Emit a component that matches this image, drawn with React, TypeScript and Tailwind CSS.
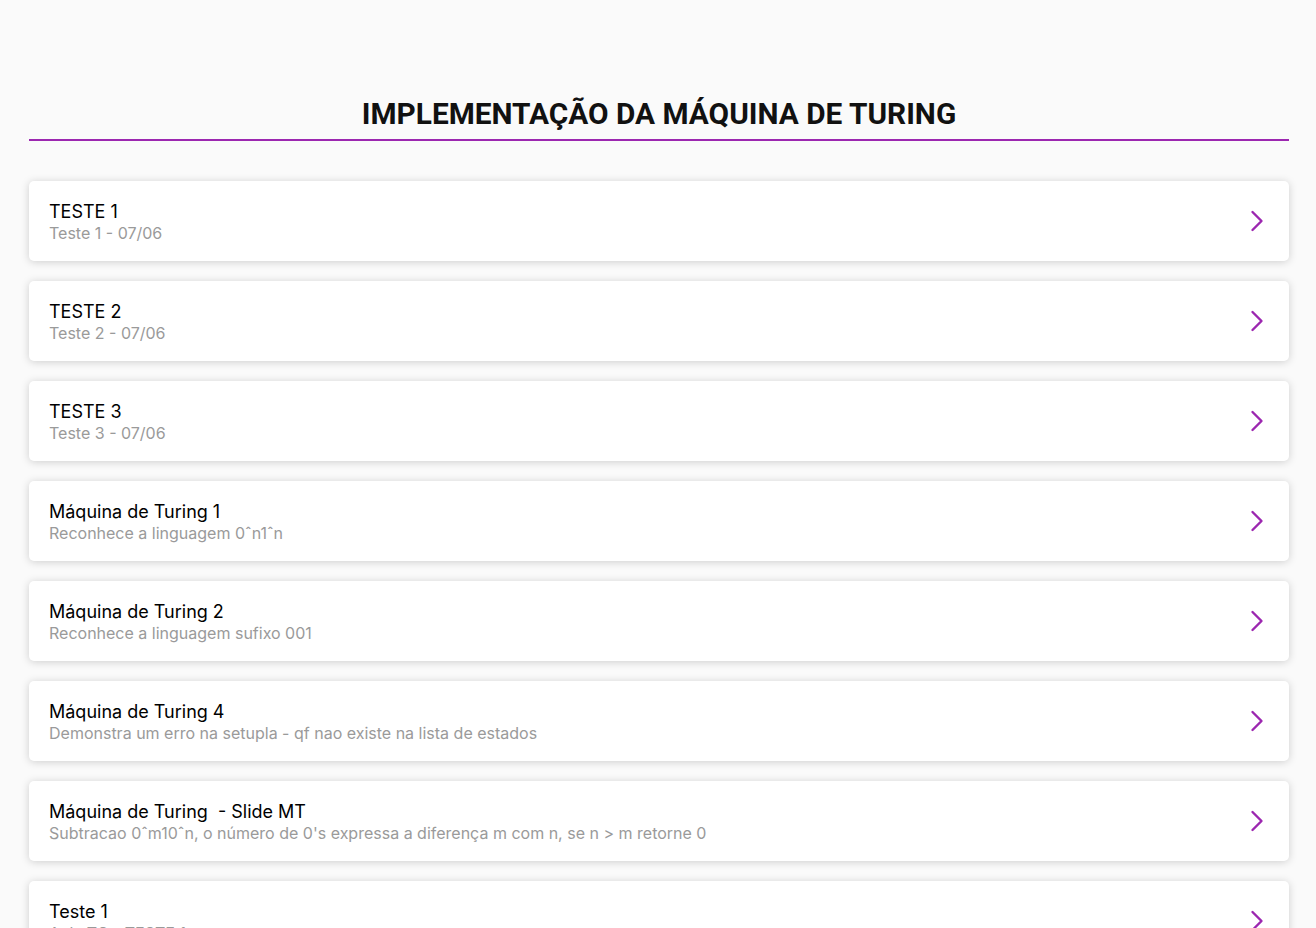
import React from 'react';

const items = [
  { title: 'TESTE 1', desc: 'Teste 1 - 07/06' },
  { title: 'TESTE 2', desc: 'Teste 2 - 07/06' },
  { title: 'TESTE 3', desc: 'Teste 3 - 07/06' },
  { title: 'Máquina de Turing 1', desc: 'Reconhece a linguagem 0ˆn1ˆn' },
  { title: 'Máquina de Turing 2', desc: 'Reconhece a linguagem sufixo 001' },
  { title: 'Máquina de Turing 4', desc: 'Demonstra um erro na setupla - qf nao existe na lista de estados' },
  { title: 'Máquina de Turing  - Slide MT', desc: "Subtracao 0ˆm10ˆn, o número de 0's expressa a diferença m com n, se n > m retorne 0" },
  { title: 'Teste 1', desc: 'Aula TC - TESTE 1' },
  { title: 'Teste 2', desc: 'Aula TC - TESTE 2' },
];

function Chevron() {
  return (
    <svg width="14" height="22" viewBox="0 0 14 22" fill="none" className="shrink-0">
      <polyline points="2.5,2 11.5,11 2.5,20" stroke="#9c27b0" strokeWidth="2.4" strokeLinecap="round" strokeLinejoin="round" />
    </svg>
  );
}

export default function App() {
  return (
    <div className="min-h-screen bg-[#fafafa] pl-[29px] pr-[27px] pt-[96px] pb-10 font-['Inter','Noto_Sans',sans-serif]">
      <h1 className="text-center text-[29.8px] leading-[36px] font-bold text-[#111] font-['Roboto','Liberation_Sans',sans-serif] pb-[7px] border-b-2 border-[#9c27b0]">
        IMPLEMENTAÇÃO DA MÁQUINA DE TURING
      </h1>
      <div className="mt-[40px] flex flex-col gap-5">
        {items.map((it, i) => (
          <div
            key={i}
            className="h-20 bg-white rounded-[5px] shadow-[0_1px_8px_rgba(0,0,0,0.18)] flex items-center justify-between pl-5 pr-[25px] cursor-pointer"
          >
            <div className="flex flex-col mt-[3px]">
              <span className="text-[18px] leading-[22px] text-black whitespace-pre">{it.title}</span>
              <span className="text-[16px] leading-[21px] text-[#9a9a9a]">{it.desc}</span>
            </div>
            <Chevron />
          </div>
        ))}
      </div>
    </div>
  );
}
